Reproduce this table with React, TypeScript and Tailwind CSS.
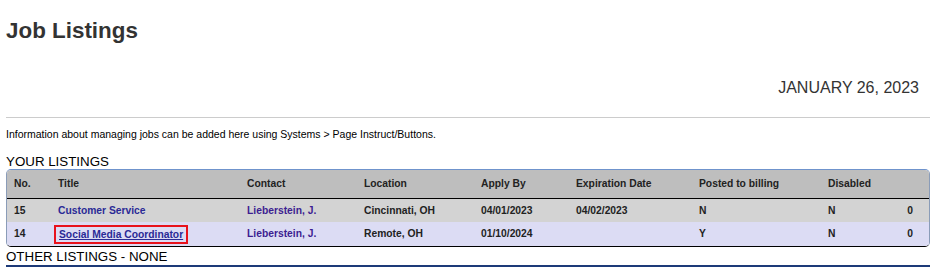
const listings = [
  {
    no: "15",
    title: "Customer Service",
    contact: "Lieberstein, J.",
    location: "Cincinnati, OH",
    applyBy: "04/01/2023",
    expires: "04/02/2023",
    billed: "N",
    disabled: "N",
    count: "0",
    focused: false,
    rowClass: "bg-[#d3d3d3]",
  },
  {
    no: "14",
    title: "Social Media Coordinator",
    contact: "Lieberstein, J.",
    location: "Remote, OH",
    applyBy: "01/10/2024",
    expires: "",
    billed: "Y",
    disabled: "N",
    count: "0",
    focused: true,
    rowClass: "bg-[#dcdcf4]",
  },
];

const headers = ["No.", "Title", "Contact", "Location", "Apply By", "Expiration Date", "Posted to billing", "Disabled", ""];

export default function App() {
  return (
    <div className="min-h-[270px] bg-white px-[6px] font-['Liberation_Sans',Arial,sans-serif] text-black">
      <h1 className="pt-[18px] text-[22.4px] font-bold leading-[26px] text-[#333]">Job Listings</h1>

      <p className="mt-[35px] pr-[11px] text-right text-[16px] leading-[18px] text-[#333]">JANUARY 26, 2023</p>

      <hr className="mt-[20px] border-0 border-t border-[#cccccc]" />

      <p className="mt-[10px] text-[10.5px] leading-[13px]">
        Information about managing jobs can be added here using Systems &gt; Page Instruct/Buttons.
      </p>

      <h2 className="mt-[13px] text-[13.33px] leading-[15px]">YOUR LISTINGS</h2>

      <div className="overflow-hidden rounded-[5px] border border-[#8a9cb8] border-t-[#6f93cc] border-b-black">
        <table className="w-full table-fixed border-collapse text-[10.3px] font-bold">
          <colgroup>
            <col className="w-[44px]" />
            <col className="w-[189px]" />
            <col className="w-[117px]" />
            <col className="w-[117px]" />
            <col className="w-[95px]" />
            <col className="w-[123px]" />
            <col className="w-[129px]" />
            <col className="w-[70px]" />
            <col />
          </colgroup>
          <thead>
            <tr className="h-[28px] border-b border-black bg-[#bebebe] text-[#222]">
              {headers.map((h, i) => (
                <th key={i} className="pl-[7px] text-left font-bold">
                  {h}
                </th>
              ))}
            </tr>
          </thead>
          <tbody>
            {listings.map((job) => (
              <tr key={job.no} className={`h-[24px] text-[#222] ${job.rowClass}`}>
                <td className="pl-[7px]">{job.no}</td>
                <td className="pl-[3px]">
                  {job.focused ? (
                    <a href="#" className="inline-block border-2 border-[#e8121c] px-[3px] leading-[15px] text-[#2a2a96] underline">
                      {job.title}
                    </a>
                  ) : (
                    <a href="#" className="pl-[4px] text-[#2a2a96]">
                      {job.title}
                    </a>
                  )}
                </td>
                <td className="pl-[7px] text-[#3d1e91]">{job.contact}</td>
                <td className="pl-[7px]">{job.location}</td>
                <td className="pl-[7px]">{job.applyBy}</td>
                <td className="pl-[7px]">{job.expires}</td>
                <td className="pl-[7px]">{job.billed}</td>
                <td className="pl-[7px]">{job.disabled}</td>
                <td className="pr-[16px] text-right">{job.count}</td>
              </tr>
            ))}
          </tbody>
        </table>
      </div>

      <h2 className="mt-[2px] text-[13.33px] leading-[15px]">OTHER LISTINGS - NONE</h2>

      <div className="mt-px h-[2px] bg-[#1d3a78]" />
    </div>
  );
}
